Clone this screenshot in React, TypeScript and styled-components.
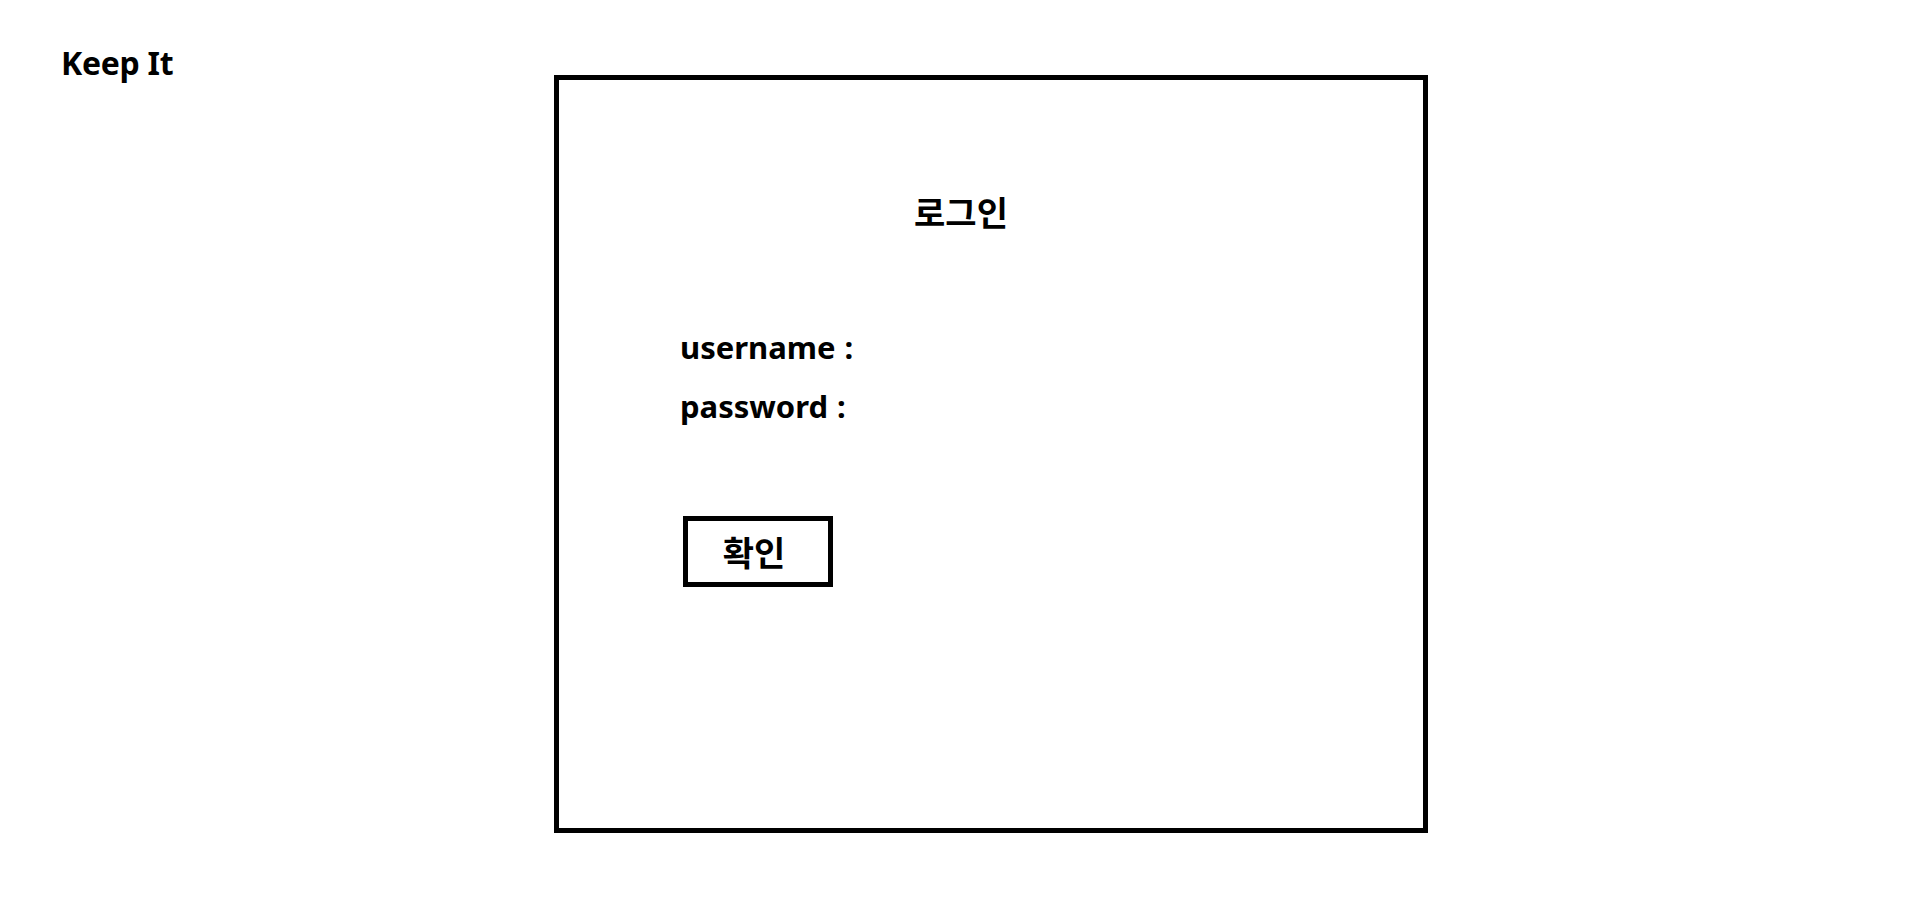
import React from "react";
import styled, { createGlobalStyle } from "styled-components";

const GlobalStyle = createGlobalStyle`
  html, body {
    margin: 0;
    padding: 0;
    background: #ffffff;
    color: #000000;
    font-family: "Noto Sans", "Noto Sans CJK KR", sans-serif;
  }
`;

const Page = styled.div`
  display: flex;
  align-items: flex-start;
  padding-left: 61px;
  min-height: 914px;
  box-sizing: border-box;
`;

const Brand = styled.h1`
  margin: 0;
  padding-top: 47px;
  width: 493px;
  flex-shrink: 0;
  font-size: 32px;
  line-height: 1;
  font-weight: 700;
  letter-spacing: -0.3px;
`;

const LoginBox = styled.section`
  margin-top: 75px;
  width: 874px;
  height: 758px;
  box-sizing: border-box;
  border: 5px solid #000;
  display: flex;
  flex-direction: column;
`;

const Title = styled.h2`
  margin: 115px 0 0;
  padding-right: 60px;
  text-align: center;
  font-family: "Noto Sans CJK KR", sans-serif;
  font-size: 34px;
  line-height: 1;
  font-weight: 700;
`;

const Form = styled.form`
  display: flex;
  flex-direction: column;
  align-items: flex-start;
  padding-left: 121px;
  margin-top: 89px;
`;

const FieldLabel = styled.label`
  display: block;
  font-size: 31px;
  line-height: 59px;
  font-weight: 700;
  word-spacing: 1px;
`;

const SubmitButton = styled.button`
  margin-top: 80px;
  margin-left: 3px;
  width: 150px;
  height: 71px;
  box-sizing: border-box;
  border: 5px solid #000;
  background: #fff;
  color: #000;
  font-family: "Noto Sans CJK KR", sans-serif;
  font-size: 34px;
  font-weight: 700;
  line-height: 1;
  padding: 0 8px 0 0;
  cursor: pointer;
`;

export default function App() {
  return (
    <>
      <GlobalStyle />
      <Page>
        <Brand>Keep It</Brand>
        <LoginBox>
          <Title>로그인</Title>
          <Form onSubmit={(e) => e.preventDefault()}>
            <FieldLabel>username :</FieldLabel>
            <FieldLabel>password :</FieldLabel>
            <SubmitButton type="submit">확인</SubmitButton>
          </Form>
        </LoginBox>
      </Page>
    </>
  );
}
